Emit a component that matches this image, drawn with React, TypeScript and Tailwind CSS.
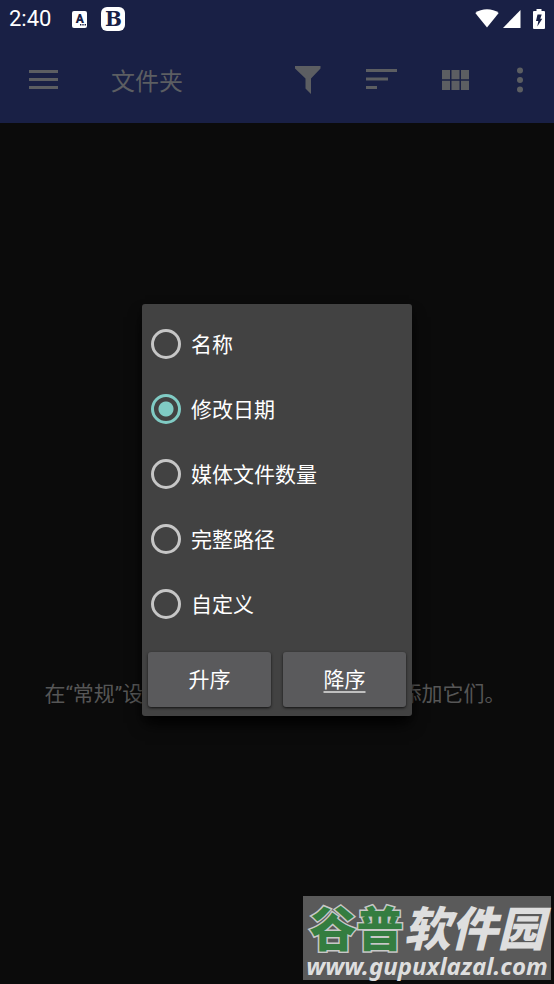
import { useState } from "react";
import clsx from "clsx";

const SORT_OPTIONS = [
  { value: "name", label: "名称" },
  { value: "date", label: "修改日期" },
  { value: "count", label: "媒体文件数量" },
  { value: "path", label: "完整路径" },
  { value: "custom", label: "自定义" },
];

export default function App() {
  return (
    <div className="relative min-h-screen flex flex-col bg-[#0b0b0b] font-[Roboto,'Noto_Sans_CJK_SC',sans-serif]">
      <header className="bg-[#192045]">
        <StatusBar />
        <Toolbar />
      </header>

      <main className="flex-1 flex flex-col">
        <div className="grow-2" />
        <p className="pt-1 pr-1 text-center text-[21px] leading-6 whitespace-nowrap text-[#565656]">
          在“常规”设置中启用隐藏的文件夹 或者添加它们。
        </p>
        <div className="grow" />
      </main>

      <SortDialog />
      <Watermark />
    </div>
  );
}

function StatusBar() {
  return (
    <div className="h-[38px] px-[9px] flex items-center text-white">
      <span className="text-[22px] leading-6">2:40</span>
      <span className="relative ml-[21px] w-[15px] h-[17px] rounded-xs bg-white text-center text-[12px] leading-4 font-black text-[#192045]">
        A
        <svg className="absolute right-px bottom-[2px] w-[6px] h-[2px]" viewBox="0 0 6 2" fill="currentColor">
          <path d="M0 0h1.400v1.500H0zM2.300 0h1.400v1.500H2.300zM4.600 0H6v1.500H4.600z" />
        </svg>
      </span>
      <span className="ml-[14px] w-6 h-6 rounded-md bg-white flex items-center justify-center font-['DejaVu_Serif',serif] font-bold text-[20px] leading-6 text-[#192045]">
        B
      </span>
      <div className="ml-auto flex items-center">
        <svg className="w-6 h-5" viewBox="0 0 24 20" fill="#fff">
          <path d="M12 18.500 L0.300 4 C6.500-1 17.500-1 23.700 4 Z" />
        </svg>
        <svg className="ml-1 w-[18px] h-[18px]" viewBox="0 0 18 18" fill="#fff">
          <path d="M17.500 0 V18 H0 Z" />
        </svg>
        <svg className="ml-3 w-3 h-5" viewBox="0 0 12 20">
          <path d="M3.500 0h5v2H11a1 1 0 0 1 1 1v16a1 1 0 0 1-1 1H1a1 1 0 0 1-1-1V3a1 1 0 0 1 1-1h2.500z" fill="#fff" />
          <path d="M4.500 5.500h4.200L7.300 9.800h2L4.300 17.500 5.300 12H3z" fill="#192045" />
        </svg>
      </div>
    </div>
  );
}

function Toolbar() {
  return (
    <div className="h-[85px] pb-[2px] pl-[29px] pr-[31px] flex items-center text-[#5c5e62]">
      <button type="button" aria-label="菜单">
        <svg className="w-[29px] h-5" viewBox="0 0 29 20" fill="currentColor">
          <path d="M0 0h29v3H0zM0 8h29v3H0zM0 16h29v3H0z" />
        </svg>
      </button>
      <h1 className="ml-[53px] pt-1 text-2xl">文件夹</h1>
      <div className="ml-auto flex items-center">
        <button type="button" aria-label="筛选">
          <svg className="w-[26px] h-7" viewBox="0 0 26 28" fill="currentColor">
            <path d="M0 0h25.500v2.500L16 12.500V28L10.500 22.500V12.500L0 2.500z" />
          </svg>
        </button>
        <button type="button" aria-label="排序" className="ml-[45px]">
          <svg className="w-[31px] h-[22px]" viewBox="0 0 31 22" fill="currentColor">
            <path d="M0 0h31v3H0zM0 8.500h22v3H0zM0 17h11v3H0z" />
          </svg>
        </button>
        <button type="button" aria-label="视图" className="ml-[45px]">
          <svg className="w-[27px] h-5" viewBox="0 0 27 20" fill="currentColor">
            <path d="M0 0h8v9.300H0zM9.500 0h8v9.300h-8zM19 0h8v9.300h-8zM0 10.700h8V20H0zM9.500 10.700h8V20h-8zM19 10.700h8V20h-8z" />
          </svg>
        </button>
        <button type="button" aria-label="更多" className="ml-[48px]">
          <svg className="w-[6px] h-[26px]" viewBox="0 0 6 26" fill="currentColor">
            <circle cx="3" cy="3.500" r="3" />
            <circle cx="3" cy="13" r="3" />
            <circle cx="3" cy="22.500" r="3" />
          </svg>
        </button>
      </div>
    </div>
  );
}

function SortDialog() {
  const [sortBy, setSortBy] = useState("date");
  const [order, setOrder] = useState("desc");

  return (
    <div className="absolute inset-0 pt-9 flex items-center justify-center">
      <div
        role="dialog"
        aria-label="排序"
        className="w-[270px] pt-[7px] pb-[9px] px-[6px] rounded-[3px] bg-[#424242] text-white shadow-lg shadow-black"
      >
        {SORT_OPTIONS.map(({ value, label }) => (
          <label key={value} className="h-[65px] pl-[3px] flex items-center gap-[10px] text-[21px]">
            <input
              type="radio"
              name="sort"
              value={value}
              checked={sortBy === value}
              onChange={() => setSortBy(value)}
              className="appearance-none w-[30px] h-[30px] rounded-full border-3 border-[#c6c6c6] checked:border-[#80cbc4] checked:bg-[radial-gradient(circle,#80cbc4_7px,transparent_8px)]"
            />
            <span className="pt-1">{label}</span>
          </label>
        ))}

        {/* 升序 / 降序 */}
        <div className="mt-4 flex gap-3">
          <OrderButton active={order === "asc"} onClick={() => setOrder("asc")}>
            升序
          </OrderButton>
          <OrderButton active={order === "desc"} onClick={() => setOrder("desc")}>
            降序
          </OrderButton>
        </div>
      </div>
    </div>
  );
}

function OrderButton({
  active,
  onClick,
  children,
}: {
  active: boolean;
  onClick: () => void;
  children: React.ReactNode;
}) {
  return (
    <button
      type="button"
      onClick={onClick}
      className={clsx(
        "flex-1 h-[55px] pt-[2px] rounded-[3px] bg-[#5a5a5c] text-[21px] shadow-sm shadow-black/60",
        active && "underline decoration-2 decoration-[#c0c0c0] underline-offset-4"
      )}
    >
      {children}
    </button>
  );
}

function Watermark() {
  return (
    <div className="absolute right-[3px] bottom-[4px] w-[248px] h-[84px] flex flex-col items-center bg-[#5a5a5a] text-[#dedede] whitespace-nowrap">
      <div className="flex text-[47px] leading-[60px] font-black font-['Noto_Sans_CJK_SC',sans-serif]">
        <span className="text-[#347d40] [-webkit-text-stroke:3px_#c8c8c8] [paint-order:stroke_fill]">
          谷普
        </span>
        <span className="italic">软件园</span>
      </div>
      <span className="text-2xl leading-5 font-bold italic font-['Noto_Sans',sans-serif]">
        www.gupuxlazal.com
      </span>
    </div>
  );
}
